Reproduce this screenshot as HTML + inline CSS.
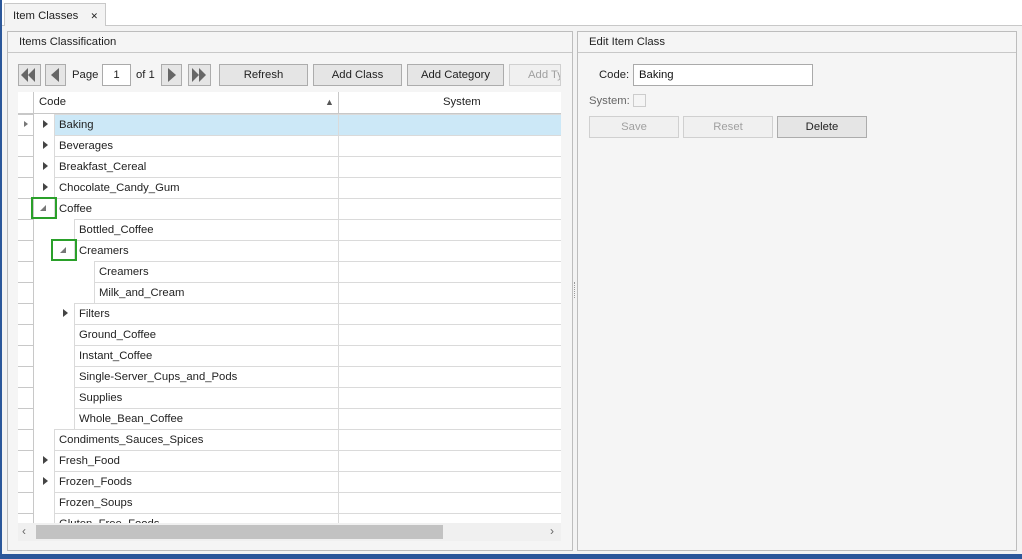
<!DOCTYPE html>
<html><head><style>
*{box-sizing:border-box;margin:0;padding:0}
body{width:1022px;height:559px;overflow:hidden;background:#fff;font-family:"Liberation Sans",sans-serif;font-size:11.3px;color:#222;position:relative}
.a{position:absolute}
.btn{position:absolute;height:22px;border:1px solid #acacac;background:#e5e5e5;text-align:center;line-height:20px;color:#222}
.dis{color:#a0a0a0;border-color:#d0d0d0;background:#f0f0f0}
.row{position:absolute;height:21px;border-top:1px solid #dadada;border-left:1px solid #dadada;background:#fff;padding-left:4px;line-height:20px;width:0}
.ri{position:absolute;left:18px;width:16px;height:1px;background:#c8c8c8}
.tri{position:absolute;width:0;height:0;border-top:4px solid transparent;border-bottom:4px solid transparent;border-left:5px solid #444}
.exp{position:absolute;width:0;height:0;border-left:6px solid transparent;border-bottom:6px solid #777}
.gb{position:absolute;border:2px solid #2aa02a;width:26px;height:22px}
.nt{position:absolute;width:0;height:0;border-top:7px solid transparent;border-bottom:7px solid transparent}
</style></head><body>
<div class="a" style="left:0;top:0;width:2px;height:559px;background:#2b579a"></div>
<div class="a" style="left:0;top:554px;width:1022px;height:5px;background:#2b579a"></div>
<div class="a" style="left:2px;top:25px;width:1020px;height:529px;background:#f3f3f3;border-top:1px solid #c8c8c8"></div>
<div class="a" style="left:4px;top:3px;width:102px;height:23px;background:#f3f3f3;border:1px solid #c8c8c8;border-bottom:none;padding:6px 0 0 8px">Item Classes <span style="margin-left:9px;font-size:9px">✕</span></div>

<!-- left panel -->
<div class="a" style="left:7px;top:31px;width:566px;height:520px;border:1px solid #bdbdbd;background:#f5f5f5"></div>
<div class="a" style="left:8px;top:52px;width:564px;height:1px;background:#c8c8c8"></div>
<div class="a" style="left:19px;top:36px">Items Classification</div>
<div class="btn" style="left:18px;top:64px;width:23px"></div>
<div class="nt" style="left:21px;top:68px;border-right:7px solid #666"></div><div class="nt" style="left:28px;top:68px;border-right:7px solid #666"></div>
<div class="btn" style="left:45px;top:64px;width:21px"></div>
<div class="nt" style="left:51px;top:68px;border-right:8px solid #666"></div>
<div class="a" style="left:72px;top:69px">Page</div>
<div class="a" style="left:102px;top:64px;width:29px;height:22px;background:#fff;border:1px solid #aaa;text-align:center;line-height:20px">1</div>
<div class="a" style="left:136px;top:69px">of 1</div>
<div class="btn" style="left:161px;top:64px;width:21px"></div>
<div class="nt" style="left:168px;top:68px;border-left:8px solid #666"></div>
<div class="btn" style="left:188px;top:64px;width:23px"></div>
<div class="nt" style="left:192px;top:68px;border-left:7px solid #666"></div><div class="nt" style="left:199px;top:68px;border-left:7px solid #666"></div>
<div class="btn" style="left:219px;top:64px;width:89px">Refresh</div>
<div class="btn" style="left:313px;top:64px;width:89px">Add Class</div>
<div class="btn" style="left:407px;top:64px;width:97px">Add Category</div>
<div class="btn dis" style="left:509px;top:64px;width:52px;text-align:left;padding-left:18px;overflow:hidden;white-space:nowrap">Add Type</div>

<div class="a" style="left:18px;top:92px;width:543px;height:431px;background:#fff;overflow:hidden"></div>
<div class="a" style="left:18px;top:92px;width:543px;height:22px;background:#fff;border-bottom:1px solid #c8c8c8"></div>
<div class="a" style="left:33px;top:92px;width:1px;height:431px;background:#c8c8c8"></div>
<div class="a" style="left:338px;top:92px;width:1px;height:22px;background:#c8c8c8"></div>
<div class="a" style="left:39px;top:96px">Code</div>
<div class="a" style="left:325px;top:97px;font-size:9px;color:#555">▲</div>
<div class="a" style="left:443px;top:96px">System</div>

<div id="g" class="a" style="left:0;top:0"></div>
<script>
var rows=[["Baking",0,1],["Beverages",0,1],["Breakfast_Cereal",0,1],["Chocolate_Candy_Gum",0,1],["Coffee",0,2],["Bottled_Coffee",1,0],["Creamers",1,2],["Creamers",2,0],["Milk_and_Cream",2,0],["Filters",1,1],["Ground_Coffee",1,0],["Instant_Coffee",1,0],["Single-Server_Cups_and_Pods",1,0],["Supplies",1,0],["Whole_Bean_Coffee",1,0],["Condiments_Sauces_Spices",0,0],["Fresh_Food",0,1],["Frozen_Foods",0,1],["Frozen_Soups",0,0],["Gluten_Free_Foods",0,1]];
var h="";
rows.forEach(function(r,i){
 var y=114+i*21;if(y>=523)return;
 var x=54+r[1]*20;var hh=Math.min(21,523-y);
 h+='<div class="row" style="left:'+x+'px;top:'+y+'px;width:'+(561-x)+'px;height:'+hh+'px;overflow:hidden;'+(i==0?'background:#cce8f7;':'')+'">'+r[0]+'</div>';
 h+='<div class="a" style="left:338px;top:'+(y+1)+'px;width:1px;height:'+(hh-1)+'px;background:#dadada"></div>';
 h+='<div class="ri" style="top:'+y+'px"></div>';
 if(r[2]==1&&y+11<523)h+='<div class="tri" style="left:'+(x-11)+'px;top:'+(y+6)+'px"></div>';
 if(r[2]==2){h+='<div class="exp" style="left:'+(x-14)+'px;top:'+(y+7)+'px"></div><div class="gb" style="left:'+(x-23)+'px;top:'+(y-1)+'px"></div>';}
});
h+='<div class="tri" style="left:24px;top:121px;border-left-color:#777;border-top-width:3px;border-bottom-width:3px;border-left-width:4px"></div>';
document.getElementById("g").innerHTML=h;
</script>
<div class="a" style="left:18px;top:523px;width:543px;height:18px;background:#f0f0f0"></div>
<div class="a" style="left:36px;top:525px;width:407px;height:14px;background:#c2c2c2"></div>
<div class="a" style="left:22px;top:524px;color:#666;font-size:12px">‹</div>
<div class="a" style="left:550px;top:524px;color:#666;font-size:12px">›</div>
<div class="a" style="left:574px;top:282px;width:2px;height:16px;border-left:1px dotted #999"></div>

<!-- right panel -->
<div class="a" style="left:577px;top:31px;width:440px;height:520px;border:1px solid #bdbdbd;background:#f5f5f5"></div>
<div class="a" style="left:578px;top:52px;width:438px;height:1px;background:#c8c8c8"></div>
<div class="a" style="left:589px;top:36px">Edit Item Class</div>
<div class="a" style="left:599px;top:69px">Code:</div>
<div class="a" style="left:633px;top:64px;width:180px;height:22px;background:#fff;border:1px solid #aaa;padding-left:5px;line-height:20px;color:#111">Baking</div>
<div class="a" style="left:589px;top:95px;color:#666">System:</div>
<div class="a" style="left:633px;top:94px;width:13px;height:13px;border:1px solid #ccc;background:#f5f5f5"></div>
<div class="btn dis" style="left:589px;top:116px;width:90px">Save</div>
<div class="btn dis" style="left:683px;top:116px;width:90px">Reset</div>
<div class="btn" style="left:777px;top:116px;width:90px">Delete</div>
</body></html>
